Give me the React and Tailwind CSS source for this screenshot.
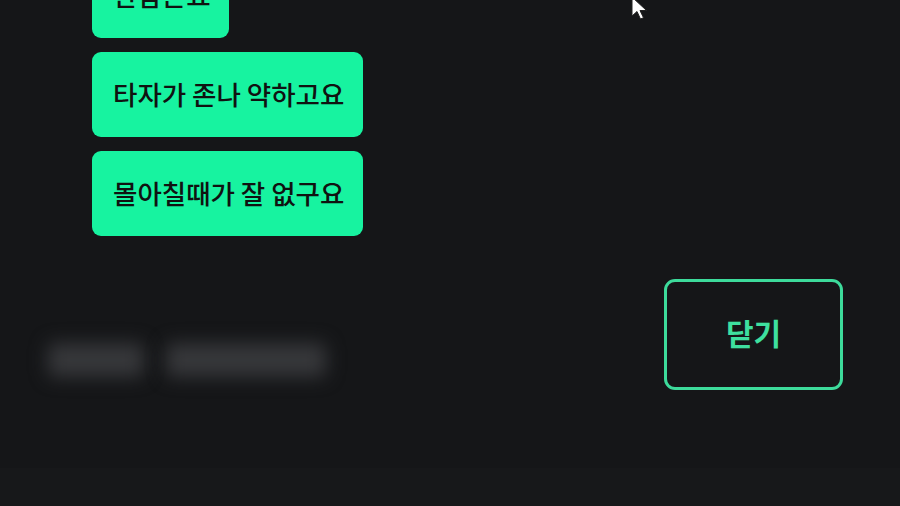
import React from "react";

const font = { fontFamily: '"Noto Sans CJK KR", "Noto Sans", sans-serif' };

function Bubble({ children, w }) {
  return (
    <div
      className={`flex h-[85px] items-center rounded-[9px] bg-[#17f3a0] pl-[21px] text-[26.5px] font-medium leading-none text-[#101211] ${w}`}
    >
      {children}
    </div>
  );
}

export default function App() {
  return (
    <div
      className="relative flex h-[506px] w-[900px] flex-col overflow-hidden bg-[#151618]"
      style={font}
    >
      <div className="mt-[-47px] flex flex-col gap-[14px] pl-[92px]">
        <Bubble w="w-[137px]">한참은요</Bubble>
        <Bubble w="w-[271px]">타자가 존나 약하고요</Bubble>
        <Bubble w="w-[271px]">몰아칠때가 잘 없구요</Bubble>
      </div>

      <div className="mt-[43px] flex items-start justify-between pl-[48px] pr-[57px]">
        <div className="mt-[64px] flex gap-[22px]">
          <div className="h-[34px] w-[96px] rounded-md bg-[#36373a] blur-[9px]" />
          <div className="h-[34px] w-[160px] rounded-md bg-[#36373a] blur-[9px]" />
        </div>
        <button className="flex h-[111px] w-[179px] items-center justify-center rounded-[11px] border-[3px] border-[#3ddb9b] bg-transparent pb-[4px] text-[30px] font-bold text-[#3ee09f]">
          닫기
        </button>
      </div>

      <div className="mt-auto h-[38px] bg-[#17181a]" />

      <svg
        className="absolute left-[631px] top-[-4px]"
        width="20"
        height="28"
        viewBox="0 0 20 28"
      >
        <path
          d="M1 1 L1 20 L6 15.5 L9.5 23 L12.5 21.7 L9 14.5 L15.5 14.5 Z"
          fill="#ffffff"
          stroke="#222"
          strokeWidth="1"
        />
      </svg>
    </div>
  );
}
